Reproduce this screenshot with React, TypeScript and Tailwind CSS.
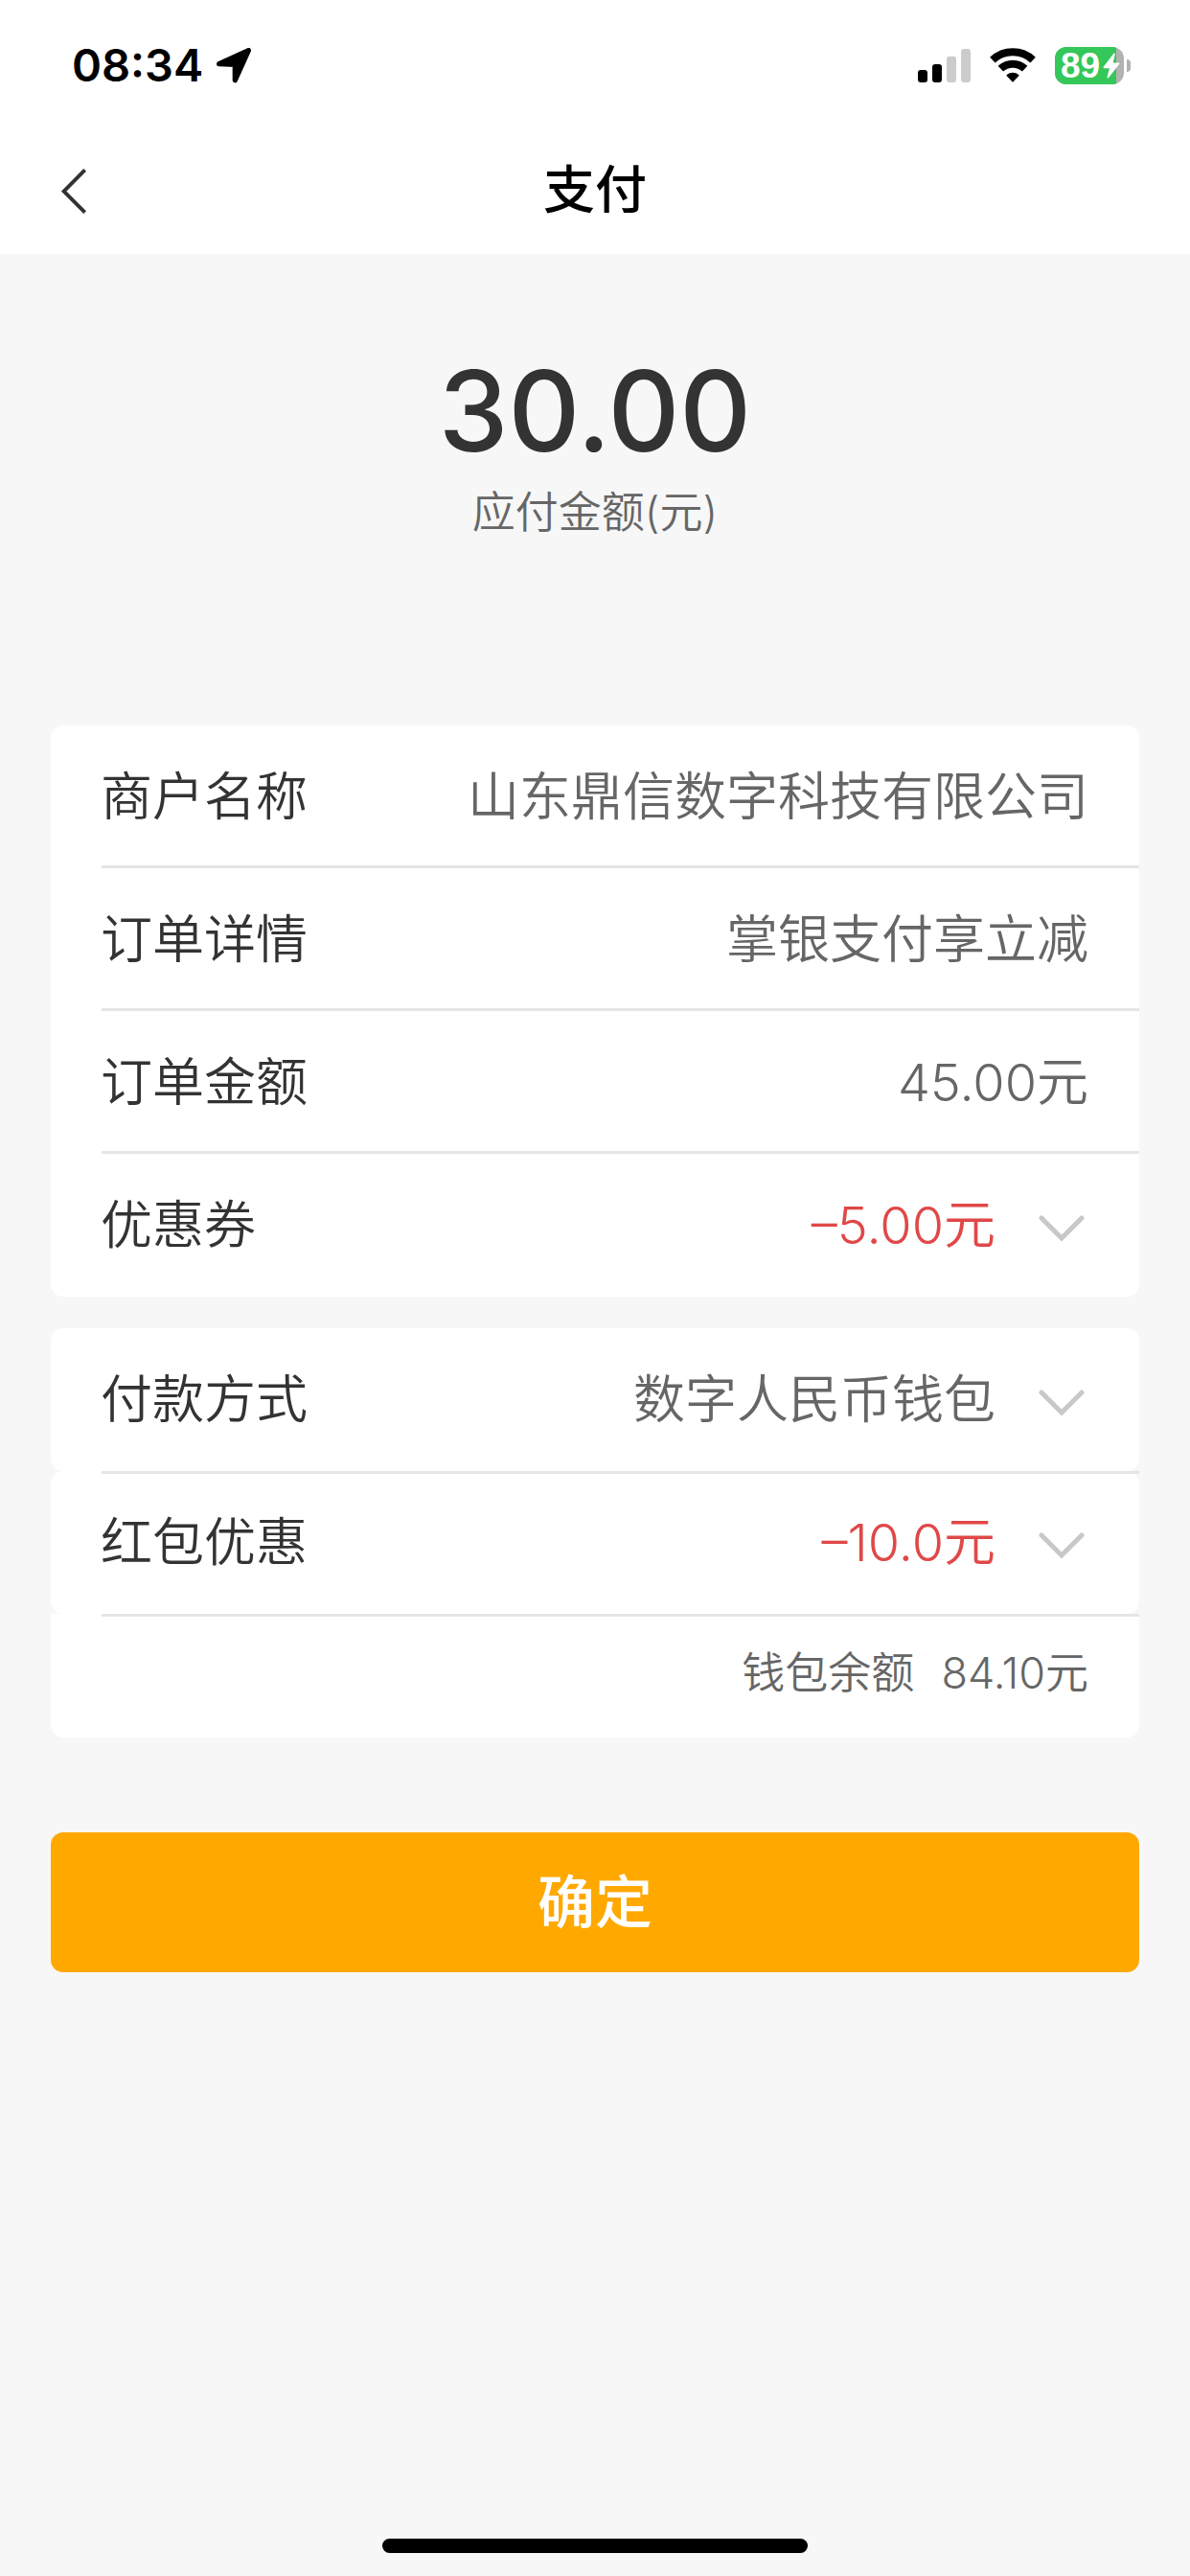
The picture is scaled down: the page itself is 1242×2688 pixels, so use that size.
import clsx from "clsx";
import type { ReactNode } from "react";

const LocationArrow = () => (
  <svg viewBox="0 0 111 111" className="size-[37px]" aria-hidden="true">
    <path
      d="M8 50 L100 8 L58 101 L58 52 Z"
      fill="#000"
      stroke="#000"
      strokeWidth="16"
      strokeLinejoin="round"
    />
  </svg>
);

const SignalBars = () => (
  <svg viewBox="0 0 165 105" className="h-[35px] w-[55px]" aria-hidden="true">
    <rect x="0" y="66" width="30" height="39" rx="9" fill="#000" />
    <rect x="45" y="48" width="30" height="57" rx="9" fill="#000" />
    <rect x="90" y="23" width="30" height="82" rx="9" fill="#ccc" />
    <rect x="135" y="0" width="30" height="105" rx="9" fill="#ccc" />
  </svg>
);

const Wifi = () => (
  <svg viewBox="0 0 144 108" className="h-[36px] w-[48px]" aria-hidden="true">
    <g fill="none" stroke="#000" strokeWidth="24">
      <path d="M8.600 38 A93 93 0 0 1 135.400 38" />
      <path d="M34 65 A56 56 0 0 1 110 65" />
    </g>
    <path
      d="M55 86 A27 27 0 0 1 89 86 L72 104 Z"
      stroke="#000"
      strokeWidth="5"
      strokeLinejoin="round"
    />
  </svg>
);

const Battery = () => (
  <div className="flex items-center gap-[3px]">
    <div className="flex h-[39px] w-[72px] overflow-hidden rounded-[12px] bg-[#b3b1b2]">
      <div className="flex w-[64px] shrink-0 items-center bg-[#34c759] pl-[6px]">
        <span className="font-['Liberation_Sans',sans-serif] text-[37px] leading-[39px] font-bold text-white">
          89
        </span>
        <svg
          viewBox="0 0 54 81"
          className="ml-[3px] h-[27px] w-[18px] shrink-0"
          aria-hidden="true"
        >
          <path
            d="M36 4 L4 46 H24 L16 77 L50 34 H29 Z"
            fill="#fff"
            stroke="#fff"
            strokeWidth="5"
            strokeLinejoin="round"
          />
        </svg>
      </div>
    </div>
    <div className="h-[13px] w-[4px] rounded-r-full bg-[#b3b1b2]" />
  </div>
);

const StatusBar = () => (
  <div className="flex h-[133px] items-center justify-between pt-[3px] pr-[62px] pl-[75px]">
    <div className="flex items-center gap-[14px]">
      <span className="text-[47px] leading-[58px] font-semibold text-black">
        08:34
      </span>
      <LocationArrow />
    </div>
    <div className="flex items-center gap-[20px]">
      <SignalBars />
      <Wifi />
      <Battery />
    </div>
  </div>
);

const ChevronDown = () => (
  <svg
    viewBox="0 0 48 36"
    className="ml-[45px] h-[36px] w-[48px] shrink-0"
    aria-hidden="true"
  >
    <path
      d="M3 10 L24 31 L45 10"
      fill="none"
      stroke="#c8c8c8"
      strokeWidth="5"
      strokeLinecap="round"
    />
  </svg>
);

type RowProps = {
  label: string;
  value: ReactNode;
  red?: boolean;
  select?: boolean;
};

const Row = ({ label, value, red, select }: RowProps) => {
  const content = (
    <>
      <span className="text-[#333]">{label}</span>
      <span
        className={clsx(
          "ml-auto text-right",
          red ? "text-[#e04848]" : "text-[#666]"
        )}
      >
        {value}
      </span>
      {select && <ChevronDown />}
    </>
  );

  return select ? (
    <button
      type="button"
      className="flex h-[149px] w-full items-center pr-[57px] pl-[52px] text-left text-[54px] leading-[80px] font-[350]"
    >
      {content}
    </button>
  ) : (
    <div className="flex h-[149px] items-center pr-[53px] pl-[52px] text-[54px] leading-[80px] font-[350]">
      {content}
    </div>
  );
};

export default function App() {
  return (
    <div className="flex min-h-screen flex-col bg-[#f7f7f7] font-['Inter','Noto_Sans_CJK_SC',sans-serif]">
      <header className="bg-white">
        <StatusBar />
        <div className="grid h-[132px] grid-cols-[1fr_auto_1fr] items-center">
          <button type="button" aria-label="返回" className="w-fit pl-[64px]">
            <svg viewBox="0 0 78 141" className="h-[47px] w-[26px]">
              <path
                d="M74 4 L8 71 L74 137"
                fill="none"
                stroke="#333"
                strokeWidth="12"
              />
            </svg>
          </button>
          <h1 className="text-[54px] leading-[80px] font-medium text-black">
            支付
          </h1>
        </div>
      </header>

      <main className="px-[53px]">
        <section className="flex h-[492px] flex-col items-center pt-[92px]">
          <p className="text-[116px] leading-[144px] font-medium text-[#333]">
            30.00
          </p>
          <p className="text-[45px] leading-[68px] font-[350] text-[#666]">
            应付金额(元)
          </p>
        </section>

        <section className="rounded-[13px] bg-white">
          <Row label="商户名称" value="山东鼎信数字科技有限公司" />
          <div className="-mt-[3px] ml-[53px] h-[3px] bg-[#e5e5e5]" />
          <Row label="订单详情" value="掌银支付享立减" />
          <div className="-mt-[3px] ml-[53px] h-[3px] bg-[#e5e5e5]" />
          <Row label="订单金额" value="45.00元" />
          <div className="-mt-[3px] ml-[53px] h-[3px] bg-[#e5e5e5]" />
          <Row label="优惠券" value="–5.00元" red select />
        </section>

        {/* every row here is its own rounded block, the line lies on the next one */}
        <section className="mt-[33px]">
          <div className="rounded-[13px] bg-white">
            <Row label="付款方式" value="数字人民币钱包" select />
          </div>
          <div className="relative -mb-[3px] ml-[53px] h-[3px] bg-[#e5e5e5]" />
          <div className="rounded-[13px] bg-white">
            <Row label="红包优惠" value="–10.0元" red select />
          </div>
          <div className="relative -mb-[3px] ml-[53px] h-[3px] bg-[#e5e5e5]" />
          <div className="flex h-[129px] items-center justify-end gap-[28px] rounded-b-[13px] bg-white pr-[53px] pb-[6px] text-[45px] leading-[64px] font-[350] text-[#666]">
            <span>钱包余额</span>
            <span>84.10元</span>
          </div>
        </section>

        <button
          type="button"
          className="mt-[99px] h-[146px] w-full rounded-[13px] bg-[#ffa800] text-[60px] leading-[80px] font-medium text-white"
        >
          确定
        </button>
      </main>

      <div className="mx-auto mt-auto mb-[24px] h-[15px] w-[444px] rounded-full bg-black" />
    </div>
  );
}
